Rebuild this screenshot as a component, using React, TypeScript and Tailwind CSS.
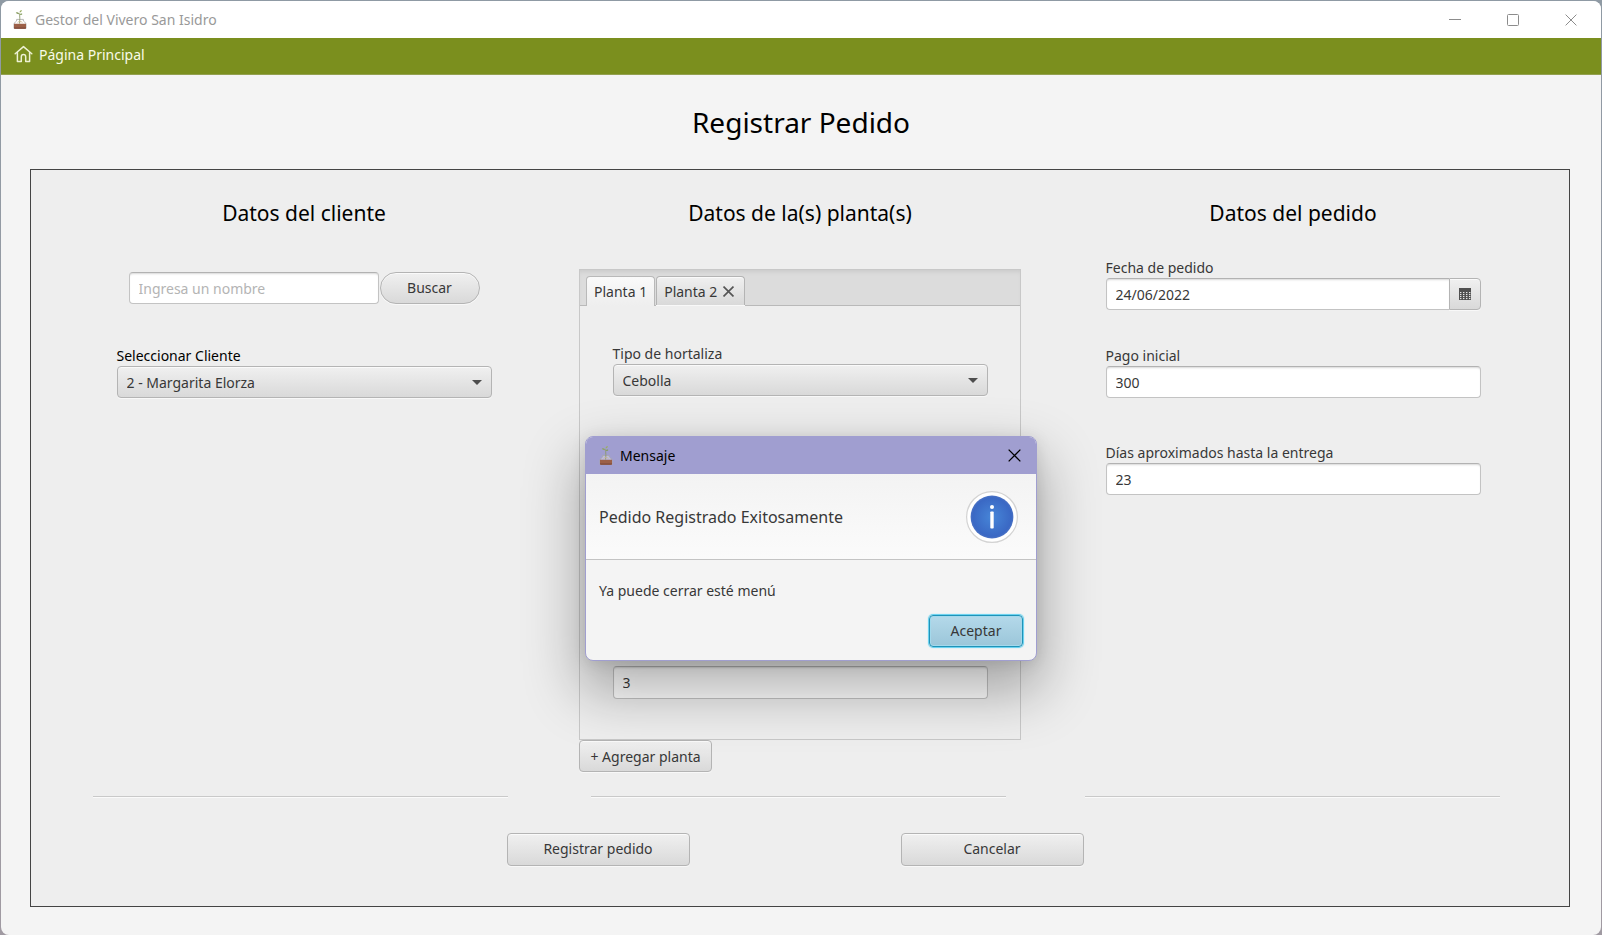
import type { ReactNode } from "react";

const controlFace =
  "border border-[#b4b4b4] bg-linear-to-b from-[#f0f0f0] to-[#d9d9d9] text-[#383838] shadow-[inset_0_1px_0_#fafafa,0_1px_0_#f8f8f8]";
const fieldFace =
  "border border-[#c3c3c3] border-t-[#b2b2b2] bg-white text-[#383838] shadow-[inset_0_2px_2px_-1px_#d8d8d8] outline-none placeholder:text-[#b4b4b4]";

function PlantIcon() {
  return (
    <svg width="16" height="22" viewBox="0 0 16 22" fill="none" aria-hidden="true">
      <path d="M4.6 10.4h6.8v1.6l2.6 2.4v5H2v-5l2.6-2.4z" fill="#ffffff" fillOpacity="0.3" stroke="#a8a8a8" strokeWidth="0.8" />
      <path d="M2 14.8h12v4a1 1 0 0 1-1 1H3a1 1 0 0 1-1-1z" fill="#9c6048" />
      <path d="M2 18.2h12v.6a1 1 0 0 1-1 1H3a1 1 0 0 1-1-1z" fill="#855040" />
      <path d="M7.6 14.6c.5-3.6.1-7 0-10.2" stroke="#8c9a6b" strokeWidth="0.9" />
      <path d="M7.4 5C6 5.4 4.6 5 3.8 3.6 5.4 3 6.8 3.5 7.4 5z" fill="#8fa36a" />
      <path d="M7.6 3.4C7.6 2 8.4 1.1 9.8 1.1c0 1.4-.8 2.3-2.2 2.3z" fill="#9aae62" />
      <path d="M7.8 5.6c.6-1.1 1.6-1.3 2.6-.7-.6 1.1-1.6 1.4-2.6.7z" fill="#7f9a58" />
      <path d="M5.6 13.4c1.2-1.2 3.6-1.2 4.8 0" stroke="#c9b48a" strokeWidth="0.8" />
    </svg>
  );
}

function HomeIcon() {
  return (
    <svg width="19" height="18" viewBox="0 0 19 18" fill="none" stroke="#edf1d3" strokeWidth="1.5" strokeLinejoin="round" strokeLinecap="round" aria-hidden="true">
      <path d="M1.2 8.8 9.5 1.6l8.3 7.2" />
      <path d="M3.4 7.6v9h3.9v-4.8a2.2 2.2 0 0 1 4.4 0v4.8h3.9v-9" />
    </svg>
  );
}

function Cross({ size, width }: { size: number; width: number }) {
  return (
    <svg width={size} height={size} viewBox="0 0 12 12" fill="none" stroke="currentColor" strokeWidth={width} aria-hidden="true">
      <path d="M.6.6l10.8 10.8M11.4.6.6 11.4" />
    </svg>
  );
}

function CalendarIcon() {
  return (
    <svg width="12" height="12" viewBox="0 0 12 12" aria-hidden="true">
      <path d="M0 0h12v12H0z" fill="#4f4f4f" />
      {[4, 6, 8, 10].map((y) =>
        [1, 4, 7, 10].map((x) => <rect key={`${x}-${y}`} x={x} y={y} width="1.4" height="1.1" fill="#e4e4e4" />),
      )}
    </svg>
  );
}

function InfoIcon() {
  return (
    <svg width="54" height="54" viewBox="0 0 54 54" aria-hidden="true">
      <defs>
        <radialGradient id="infoFill" cx="0.5" cy="0.5" r="0.5">
          <stop offset="0" stopColor="#4786d8" />
          <stop offset="0.9" stopColor="#3a68c4" />
          <stop offset="1" stopColor="#4a72c4" />
        </radialGradient>
      </defs>
      <circle cx="27" cy="27" r="25.4" fill="#ffffff" stroke="#d3d3d3" strokeWidth="1.2" />
      <circle cx="27" cy="27" r="21.4" fill="url(#infoFill)" />
      <circle cx="27" cy="17" r="2" fill="#ffffff" />
      <rect x="25.3" y="21.5" width="3.4" height="17" rx="0.8" fill="#ffffff" />
    </svg>
  );
}

function ComboBox({ id, value }: { id: string; value: string }) {
  return (
    <div className="relative">
      <select id={id} defaultValue={value} className={`h-8 w-full appearance-none rounded-sm pr-8 pl-[9px] outline-none ${controlFace}`}>
        <option>{value}</option>
      </select>
      <svg className="pointer-events-none absolute top-[14px] right-[10px]" width="10" height="5" viewBox="0 0 10 5" aria-hidden="true">
        <path d="M0 0h10L5 5z" fill="#4d4d4d" />
      </svg>
    </div>
  );
}

function Field({ id, label, dark, children }: { id: string; label: string; dark?: boolean; children: ReactNode }) {
  return (
    <div className="flex w-[375px] max-w-full flex-col">
      <label htmlFor={id} className={`leading-5 ${dark ? "text-black" : "text-[#383838]"}`}>
        {label}
      </label>
      {children}
    </div>
  );
}

function Column({ title, children }: { title: string; children: ReactNode }) {
  return (
    <section className="flex flex-col items-center">
      <h2 className="mt-[27px] mb-px text-[21px] leading-8 text-black">{title}</h2>
      {children}
      <hr className="mt-auto ml-3 h-[2px] w-[415px] max-w-full self-start border-t border-b border-t-[#c9c9c9] border-b-[#fafafa]" />
    </section>
  );
}

function MessageDialog() {
  return (
    <div
      role="dialog"
      aria-labelledby="dialog-title"
      className="absolute top-[436px] left-[585px] w-[452px] overflow-hidden rounded-lg border border-[#a09ed0] bg-[#f4f4f4] text-[#383838] shadow-[0_26px_56px_6px_rgba(0,0,0,0.3),0_2px_16px_rgba(0,0,0,0.1)]"
    >
      <div className="flex h-[37px] items-center bg-[#a09ed0] pr-[15px] pl-3 text-black">
        <PlantIcon />
        <h2 id="dialog-title" className="ml-[6px] flex-1">Mensaje</h2>
        <button type="button" aria-label="Cerrar">
          <Cross size={13} width={1.2} />
        </button>
      </div>
      <div className="flex h-[86px] items-center justify-between border-b border-[#c4c4c4] bg-linear-to-b from-[#f3f3f3] to-[#fbfbfb] pr-[17px] pl-[13px]">
        <p className="text-[16px]">Pedido Registrado Exitosamente</p>
        <InfoIcon />
      </div>
      <p className="mt-[21px] pl-[13px] leading-5">Ya puede cerrar esté menú</p>
      <div className="mt-[14px] mb-[13px] flex justify-end pr-[13px]">
        <button
          type="button"
          className="h-8 w-[94px] rounded-sm border border-[#2093b8] bg-linear-to-b from-[#b4d9ea] to-[#9bc6d9] pb-0.5 shadow-[0_0_1px_1px_#5fd0f0,inset_0_0_0_1px_#a3d9ec]"
        >
          Aceptar
        </button>
      </div>
    </div>
  );
}

export default function App() {
  return (
    <div className="relative flex min-h-screen flex-col bg-linear-to-b from-[#8f9aa4] to-[#a09aa2] p-px pb-0 font-['Noto_Sans',sans-serif] text-[14px] text-[#383838]">
      <div className="flex flex-1 flex-col overflow-hidden rounded-lg bg-[#f4f4f4]">
        <header className="flex h-[37px] items-center bg-white pr-6 pl-[11px] text-[#999999]">
          <PlantIcon />
          <h1 className="ml-[7px] flex-1">Gestor del Vivero San Isidro</h1>
          <div className="flex items-center gap-[46px]">
            <button type="button" aria-label="Minimizar">
              <svg width="12" height="12" viewBox="0 0 12 12" aria-hidden="true">
                <path d="M0 5.5h12" stroke="#8c8c8c" />
              </svg>
            </button>
            <button type="button" aria-label="Maximizar">
              <svg width="12" height="12" viewBox="0 0 12 12" fill="none" aria-hidden="true">
                <rect x="0.5" y="0.5" width="11" height="11" rx="1" stroke="#8c8c8c" />
              </svg>
            </button>
            <button type="button" aria-label="Cerrar ventana" className="text-[#8c8c8c]">
              <Cross size={12} width={1} />
            </button>
          </div>
        </header>
        <nav className="flex h-[37px] items-center border-b border-[#93a04f] bg-[#7b8f1e] pb-1 pl-[13px]">
          <a href="#inicio" className="flex items-center gap-[6px] text-[#f8fbe8]">
            <HomeIcon />
            Página Principal
          </a>
        </nav>
        <main className="flex flex-1 flex-col px-[29px] pb-7">
          <h2 className="mt-[27px] mb-[27px] text-center text-[28px] leading-10 text-black">Registrar Pedido</h2>
          <form className="mr-[2px] flex flex-1 flex-col border border-[#444444] bg-[#eeeeee]" onSubmit={(e) => e.preventDefault()}>
            <div className="grid h-[628px] grid-cols-[446px_442px_440px] justify-center gap-[52px] pr-[6px]">
              <Column title="Datos del cliente">
                <div className="mt-[42px] flex gap-px">
                  <input aria-label="Nombre del cliente" placeholder="Ingresa un nombre" className={`h-8 w-[250px] rounded-sm px-[9px] ${fieldFace}`} />
                  <button type="button" className={`h-8 w-[100px] rounded-full pb-0.5 ${controlFace}`}>Buscar</button>
                </div>
                <div className="mt-[42px]">
                  <Field id="cliente" label="Seleccionar Cliente" dark>
                    <ComboBox id="cliente" value="2 - Margarita Elorza" />
                  </Field>
                </div>
              </Column>
              <Column title="Datos de la(s) planta(s)">
                <div className="mt-[39px] w-full self-stretch border border-[#c8c8c8]">
                  <div role="tablist" className="flex h-9 items-end gap-px border-b border-[#b9b9b9] bg-[#dcdcdc] pl-[6px] shadow-[inset_0_4px_4px_-2px_#cbcbcb]">
                    <button type="button" role="tab" aria-selected="true" className="-mb-px h-[30px] rounded-t-sm border border-b-0 border-[#b9b9b9] bg-linear-to-b from-[#fafafa] to-[#eeeeee] px-[7px]">
                      Planta 1
                    </button>
                    <div className={`flex h-[29px] items-center gap-[6px] rounded-t-sm border-b-0 pr-[10px] pl-[7px] ${controlFace}`}>
                      <button type="button" role="tab" aria-selected="false">Planta 2</button>
                      <button type="button" aria-label="Cerrar Planta 2" className="text-[#555555]">
                        <Cross size={11} width={1.8} />
                      </button>
                    </div>
                  </div>
                  <div className="flex h-[433px] flex-col items-center justify-between pt-[38px] pb-10">
                    <Field id="hortaliza" label="Tipo de hortaliza">
                      <ComboBox id="hortaliza" value="Cebolla" />
                    </Field>
                    <input aria-label="Cantidad" defaultValue="3" className={`h-[33px] w-[375px] rounded-sm px-[9px] ${fieldFace}`} />
                  </div>
                </div>
                <button type="button" className={`h-8 w-[133px] self-start rounded-sm ${controlFace}`}>+ Agregar planta</button>
              </Column>
              <Column title="Datos del pedido">
                <div className="mt-[28px]">
                  <Field id="fecha" label="Fecha de pedido">
                    <div className="flex">
                      <input id="fecha" defaultValue="24/06/2022" className={`h-8 min-w-0 flex-1 rounded-l-sm border-r-0 px-[9px] ${fieldFace}`} />
                      <button type="button" aria-label="Abrir calendario" className={`flex h-8 w-8 items-center justify-center rounded-r-sm ${controlFace}`}>
                        <CalendarIcon />
                      </button>
                    </div>
                  </Field>
                </div>
                <div className="mt-[36px]">
                  <Field id="pago" label="Pago inicial">
                    <input id="pago" defaultValue="300" className={`h-8 rounded-sm px-[9px] ${fieldFace}`} />
                  </Field>
                </div>
                <div className="mt-[45px]">
                  <Field id="dias" label="Días aproximados hasta la entrega">
                    <input id="dias" defaultValue="23" className={`h-8 rounded-sm px-[9px] ${fieldFace}`} />
                  </Field>
                </div>
              </Column>
            </div>
            <div className="mt-[35px] flex justify-center gap-[211px] pr-[10px]">
              <button type="submit" className={`h-[33px] w-[183px] rounded-sm pb-0.5 ${controlFace}`}>Registrar pedido</button>
              <button type="button" className={`h-[33px] w-[183px] rounded-sm pb-0.5 ${controlFace}`}>Cancelar</button>
            </div>
          </form>
        </main>
      </div>
      <MessageDialog />
    </div>
  );
}
